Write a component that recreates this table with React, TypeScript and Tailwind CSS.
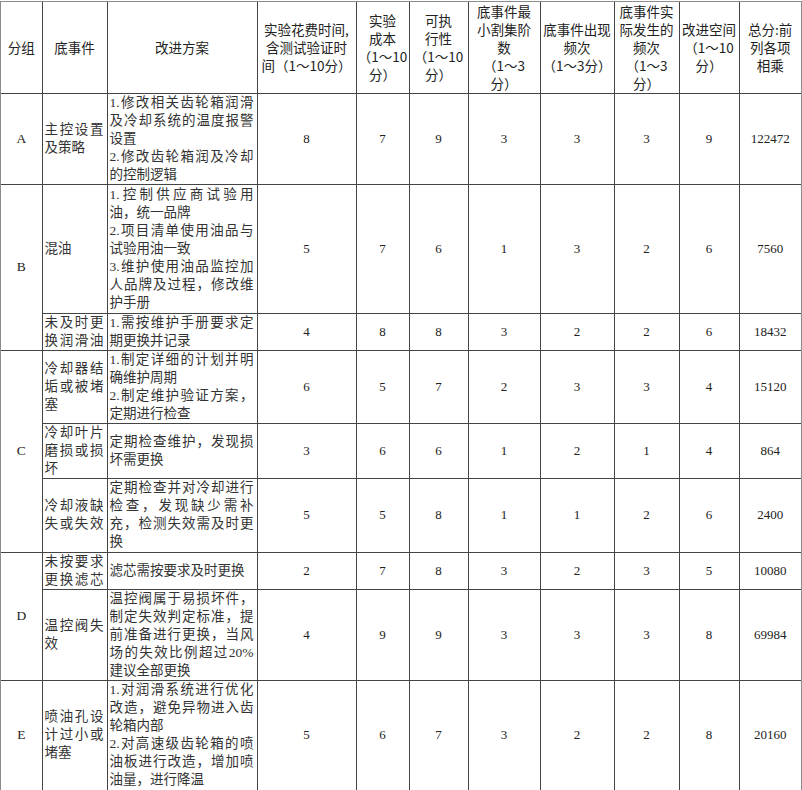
const cols = [41, 65, 150, 99, 53, 59, 72, 74, 65, 60, 62]

const headers = [
  ["分组"],
  ["底事件"],
  ["改进方案"],
  ["实验花费时间,", "含测试验证时", "间（1～10分）"],
  ["实验", "成本", "（1～10", "分）"],
  ["可执", "行性", "（1～10", "分）"],
  ["底事件最", "小割集阶", "数", "（1～3", "分）"],
  ["底事件出现", "频次", "（1～3分）"],
  ["底事件实", "际发生的", "频次", "（1～3", "分）"],
  ["改进空间", "（1～10", "分）"],
  ["总分:前", "列各项", "相乘"],
]

// lines starting with "<" are not stretched (last line of a paragraph)
const rows = [
  {
    h: "h-[91px]",
    group: { label: "A", span: 1 },
    event: ["主控设置", "<及策略"],
    plan: ["1.修改相关齿轮箱润滑", "及冷却系统的温度报警", "<设置", "2.修改齿轮箱润及冷却", "<的控制逻辑"],
    nums: ["8", "7", "9", "3", "3", "3", "9", "122472"],
  },
  {
    h: "h-[129px]",
    group: { label: "B", span: 2 },
    event: ["<混油"],
    plan: ["1.控制供应商试验用", "<油，统一品牌", "2.项目清单使用油品与", "<试验用油一致", "3.维护使用油品监控加", "人品牌及过程，修改维", "<护手册"],
    nums: ["5", "7", "6", "1", "3", "2", "6", "7560"],
  },
  {
    h: "h-[37px]",
    event: ["未及时更", "换润滑油"],
    plan: ["1.需按维护手册要求定", "<期更换并记录"],
    nums: ["4", "8", "8", "3", "2", "2", "6", "18432"],
  },
  {
    h: "h-[73px]",
    group: { label: "C", span: 3 },
    event: ["冷却器结", "垢或被堵", "<塞"],
    plan: ["1.制定详细的计划并明", "<确维护周期", "2.制定维护验证方案，", "<定期进行检查"],
    nums: ["6", "5", "7", "2", "3", "3", "4", "15120"],
  },
  {
    h: "h-[55px]",
    event: ["冷却叶片", "磨损或损", "<坏"],
    plan: ["定期检查维护，发现损", "<坏需更换"],
    nums: ["3", "6", "6", "1", "2", "1", "4", "864"],
  },
  {
    h: "h-[74px]",
    event: ["冷却液缺", "失或失效"],
    plan: ["定期检查并对冷却进行", "检查，发现缺少需补", "充，检测失效需及时更", "<换"],
    nums: ["5", "5", "8", "1", "1", "2", "6", "2400"],
  },
  {
    h: "h-[36px]",
    group: { label: "D", span: 2 },
    event: ["未按要求", "更换滤芯"],
    plan: ["<滤芯需按要求及时更换"],
    nums: ["2", "7", "8", "3", "2", "3", "5", "10080"],
  },
  {
    h: "h-[91px]",
    event: ["温控阀失", "<效"],
    plan: ["温控阀属于易损坏件，", "制定失效判定标准，提", "前准备进行更换，当风", "场的失效比例超过20%", "<建议全部更换"],
    nums: ["4", "9", "9", "3", "3", "3", "8", "69984"],
  },
  {
    h: "h-[110px]",
    group: { label: "E", span: 1 },
    event: ["喷油孔设", "计过小或", "<堵塞"],
    plan: ["1.对润滑系统进行优化", "改造，避免异物进入齿", "<轮箱内部", "2.对高速级齿轮箱的喷", "油板进行改造，增加喷", "<油量，进行降温"],
    nums: ["5", "6", "7", "3", "2", "2", "8", "20160"],
  },
]

const Lines = ({ lines }: { lines: string[] }) => (
  <>
    {lines.map((l, i) =>
      l.startsWith("<") ? (
        <div key={i} className="text-left">
          {l.slice(1)}
        </div>
      ) : (
        <div key={i} className="text-justify [text-align-last:justify]">
          {l}
        </div>
      )
    )}
  </>
)

const cell = "border border-[#444] align-middle"

export default function App() {
  return (
    <div className="mt-px w-[802px] border border-[#8c8c8c] bg-white text-[#222]">
      <table className="w-[800px] table-fixed border-collapse border-hidden text-[13.5px] leading-[18px]">
        <colgroup>
          {cols.map((w, i) => (
            <col key={i} style={{ width: w }} />
          ))}
        </colgroup>
        <thead>
          <tr className="h-[91px]">
            {headers.map((h, i) => (
              <th
                key={i}
                className={`${cell} p-0 text-center font-normal whitespace-nowrap font-['Noto_Sans_CJK_SC',sans-serif]`}>
                {h.map((l, j) => (
                  <div key={j}>{l}</div>
                ))}
              </th>
            ))}
          </tr>
        </thead>
        <tbody className="font-['Liberation_Serif','Noto_Sans_CJK_SC',serif] text-[#333]">
          {rows.map((r, i) => (
            <tr key={i} className={r.h}>
              {r.group && (
                <td rowSpan={r.group.span} className={`${cell} text-center text-[#222]`}>
                  {r.group.label}
                </td>
              )}
              <td className={`${cell} pl-[2px] pr-[3px]`}>
                <Lines lines={r.event} />
              </td>
              <td className={`${cell} pl-[2px] pr-[3px]`}>
                <Lines lines={r.plan} />
              </td>
              {r.nums.map((n, j) => (
                <td key={j} className={`${cell} text-center text-[13px] text-[#222]`}>
                  {n}
                </td>
              ))}
            </tr>
          ))}
        </tbody>
      </table>
    </div>
  )
}
